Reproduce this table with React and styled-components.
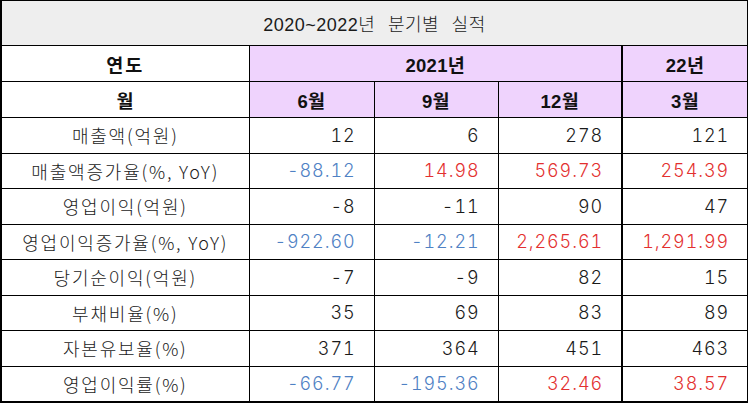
import styled, { createGlobalStyle } from "styled-components";

const GlobalStyle = createGlobalStyle`
  html, body {
    margin: 0;
    padding: 0;
    background: #ffffff;
  }
  body {
    font-family: "Liberation Sans", "Noto Sans CJK KR", sans-serif;
    color: #111111;
  }
`;

const Table = styled.table`
  width: 747px;
  border-collapse: collapse;
  table-layout: fixed;
  border-left: 2px solid #000;
  border-right: 2px solid #000;
  border-bottom: 2px solid #000;
`;

const Col = styled.col`
  width: ${(p) => p.$w}px;
`;

const TitleCell = styled.th`
  height: 44px;
  padding: 0;
  background: #eeeeee;
  border: 1px solid #000;
  font-family: "Liberation Sans", "Noto Sans CJK KR", sans-serif;
  font-weight: 300;
  font-size: 18px;
  letter-spacing: 0.5px;
  word-spacing: 7px;
  color: #1a1a1a;
  text-align: center;
`;

const HeadCell = styled.th`
  height: 35px;
  padding: 0;
  background: ${(p) => (p.$plain ? "#ffffff" : "#efd3fd")};
  border: 1px solid #000;
  border-right: ${(p) => (p.$thick ? "2px solid #000" : "1px solid #000")};
  font-family: "Liberation Sans", "Noto Sans CJK KR", sans-serif;
  font-weight: 700;
  font-size: 18.5px;
  letter-spacing: ${(p) => (p.$wide ? "2px" : "0.3px")};
  color: #111111;
  text-align: center;
`;

const LabelCell = styled.td`
  height: 34.5px;
  padding: 0;
  border: 1px solid #000;
  font-family: "Noto Sans CJK KR", sans-serif;
  font-weight: 300;
  font-size: 18px;
  letter-spacing: 1.8px;
  color: #1a1a1a;
  text-align: center;
  white-space: nowrap;
`;

const toneColor = {
  neg: "#4f81c4",
  pos: "#e3302f",
  none: "#1a1a1a",
};

const NumCell = styled.td`
  height: 34.5px;
  padding: 0 18px 0 0;
  border: 1px solid #000;
  border-right: ${(p) => (p.$thick ? "2px solid #000" : "1px solid #000")};
  font-family: "Inter", "Liberation Sans", sans-serif;
  font-weight: 300;
  font-size: 18px;
  font-variant-numeric: tabular-nums;
  letter-spacing: 0.9px;
  color: ${(p) => toneColor[p.$tone || "none"]};
  text-align: right;
  white-space: nowrap;
`;

const rows = [
  { label: "매출액(억원)", values: [["12"], ["6"], ["278"], ["121"]] },
  {
    label: "매출액증가율(%, YoY)",
    values: [["-88.12", "neg"], ["14.98", "pos"], ["569.73", "pos"], ["254.39", "pos"]],
  },
  { label: "영업이익(억원)", values: [["-8"], ["-11"], ["90"], ["47"]] },
  {
    label: "영업이익증가율(%, YoY)",
    values: [["-922.60", "neg"], ["-12.21", "neg"], ["2,265.61", "pos"], ["1,291.99", "pos"]],
  },
  { label: "당기순이익(억원)", values: [["-7"], ["-9"], ["82"], ["15"]] },
  { label: "부채비율(%)", values: [["35"], ["69"], ["83"], ["89"]] },
  { label: "자본유보율(%)", values: [["371"], ["364"], ["451"], ["463"]] },
  {
    label: "영업이익률(%)",
    values: [["-66.77", "neg"], ["-195.36", "neg"], ["32.46", "pos"], ["38.57", "pos"]],
  },
];

const months = ["6월", "9월", "12월", "3월"];
const widths = [248, 125, 124, 124, 126];

export default function App() {
  return (
    <>
      <GlobalStyle />
      <Table>
        <colgroup>
          {widths.map((w, i) => (
            <Col key={i} $w={w} />
          ))}
        </colgroup>
        <thead>
          <tr>
            <TitleCell colSpan={5}>2020~2022년 분기별 실적</TitleCell>
          </tr>
          <tr>
            <HeadCell $plain $wide>연도</HeadCell>
            <HeadCell colSpan={3} $thick>2021년</HeadCell>
            <HeadCell>22년</HeadCell>
          </tr>
          <tr>
            <HeadCell $plain>월</HeadCell>
            {months.map((m, i) => (
              <HeadCell key={m} $thick={i === 2}>
                {m}
              </HeadCell>
            ))}
          </tr>
        </thead>
        <tbody>
          {rows.map((row) => (
            <tr key={row.label}>
              <LabelCell>{row.label}</LabelCell>
              {row.values.map(([v, tone], i) => (
                <NumCell key={i} $tone={tone} $thick={i === 2}>
                  {v}
                </NumCell>
              ))}
            </tr>
          ))}
        </tbody>
      </Table>
    </>
  );
}
